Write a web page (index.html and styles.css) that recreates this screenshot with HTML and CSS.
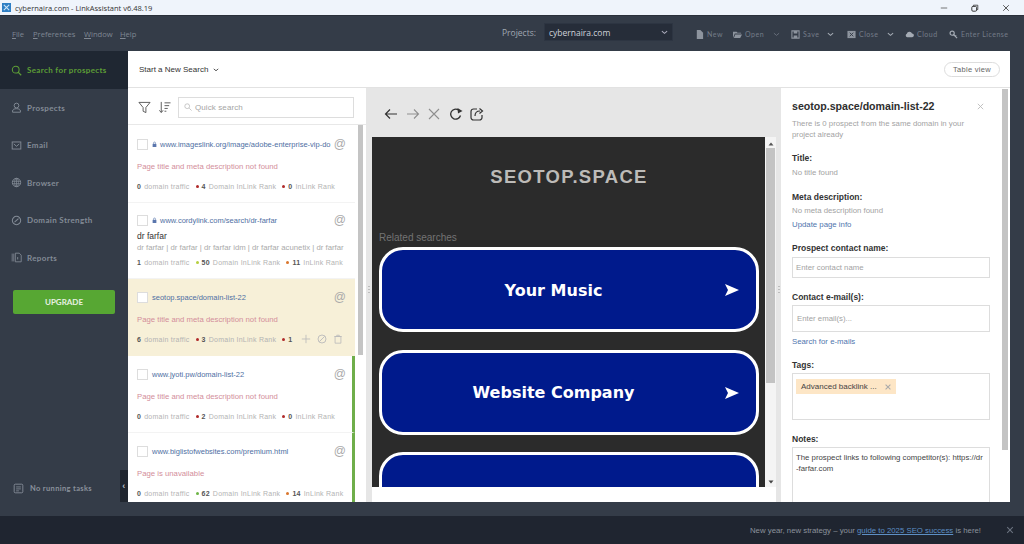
FILE: index.html
```html
<!DOCTYPE html>
<html lang="en">
<head>
<meta charset="utf-8">
<title>LinkAssistant</title>
<link rel="stylesheet" href="styles.css">
</head>
<body>
<header class="titlebar">
  <svg class="app-logo" viewBox="0 0 10 10"><rect width="10" height="10" fill="#2f7fc4"/><path d="M2 2l6 6M8 2L2 8" stroke="#cfe6f7" stroke-width="1.2"/></svg>
  <span class="title-text">cybernaira.com - LinkAssistant v6.48.19</span>
  <div class="win-controls">
    <svg viewBox="0 0 10 10"><path d="M1 5h8" stroke="#555" stroke-width="1"/></svg>
    <svg viewBox="0 0 10 10"><rect x="1" y="3" width="6" height="6" rx="1.5" fill="none" stroke="#333" stroke-width="1.2"/><path d="M3 2.5V1.5h5.5V7H7.5" fill="none" stroke="#333"/></svg>
    <svg viewBox="0 0 10 10"><path d="M1.5 1.5l7 7M8.5 1.5l-7 7" stroke="#333" stroke-width="1"/></svg>
  </div>
</header>

<div class="topbar">
  <nav class="menu">
    <span><u>F</u>ile</span><span><u>P</u>references</span><span><u>W</u>indow</span><span><u>H</u>elp</span>
  </nav>
  <span class="projects-label">Projects:</span>
  <div class="project-select"><span>cybernaira.com</span>
    <svg viewBox="0 0 8 5"><path d="M1 1l3 2.5L7 1" fill="none" stroke="#aab" stroke-width="1.2"/></svg>
  </div>
  <div class="tools">
    <span class="tool t-new"><svg viewBox="0 0 10 10"><path d="M2 0h4l3 3v7H2z" fill="#8d949e"/></svg>New</span>
    <span class="tool t-open"><svg viewBox="0 0 10 10"><path d="M0 2h4l1 1h4v1H2L0 9zM2.500 5H10L8 9H1z" fill="#8d949e"/></svg>Open<svg class="caret dim" viewBox="0 0 8 5"><path d="M1 1l3 2.500L7 1" fill="none" stroke="#6c7480" stroke-width="1"/></svg></span>
    <span class="tool t-save"><svg viewBox="0 0 10 10"><path d="M1 1h8v8H1z" fill="none" stroke="#8d949e" stroke-width="1.200"/><path d="M3 1h4v3H3zM3 6h4v3H3z" fill="#8d949e"/></svg>Save<svg class="caret" viewBox="0 0 8 5"><path d="M1 1l3 2.500L7 1" fill="none" stroke="#a4abb4" stroke-width="1.200"/></svg></span>
    <span class="tool t-close"><svg viewBox="0 0 10 10"><rect x=".5" y="1" width="9" height="8" fill="#8d949e"/><path d="M3 3l4 4M7 3L3 7" stroke="#333b47" stroke-width="1"/></svg>Close<svg class="caret" viewBox="0 0 8 5"><path d="M1 1l3 2.500L7 1" fill="none" stroke="#a4abb4" stroke-width="1.200"/></svg></span>
    <span class="tool t-cloud"><svg viewBox="0 0 10 10"><path d="M2.500 8A2 2 0 0 1 2 4.200 3 3 0 0 1 7.800 4 2 2 0 0 1 8 8z" fill="#a4abb4"/></svg>Cloud</span>
    <span class="tool t-lic"><svg viewBox="0 0 10 10"><circle cx="3.500" cy="3.500" r="2.300" fill="none" stroke="#a4abb4" stroke-width="1.300"/><path d="M5 5l4 4M7 7l1-1" stroke="#a4abb4" stroke-width="1.300"/></svg>Enter License</span>
  </div>
</div>

<div class="workspace">
  <aside class="sidebar">
    <a class="nav-item active"><svg viewBox="0 0 14 14"><circle cx="6" cy="6" r="4.300" fill="none" stroke="currentColor" stroke-width="1.300"/><path d="M9 9l4 4" stroke="currentColor" stroke-width="1.500"/></svg>Search for prospects</a>
    <a class="nav-item"><svg viewBox="0 0 14 14"><circle cx="7" cy="4.500" r="3" fill="none" stroke="currentColor" stroke-width="1.200"/><path d="M2 13v-1.500C2 9.500 4 8.500 7 8.500s5 1 5 3V13z" fill="none" stroke="currentColor" stroke-width="1.200"/></svg>Prospects</a>
    <a class="nav-item"><svg viewBox="0 0 14 14"><rect x="1.500" y="2.500" width="11" height="9" fill="none" stroke="currentColor" stroke-width="1.200"/><path d="M3.500 5L7 8l3.500-3" fill="none" stroke="currentColor" stroke-width="1.200"/></svg>Email</a>
    <a class="nav-item"><svg viewBox="0 0 14 14"><circle cx="7" cy="7" r="5.300" fill="none" stroke="currentColor" stroke-width="1.200"/><path d="M2 5.500h10M2 8.500h10M7 2v10" stroke="currentColor" stroke-width=".9"/><ellipse cx="7" cy="7" rx="2.500" ry="5.300" fill="none" stroke="currentColor" stroke-width=".9"/></svg>Browser</a>
    <a class="nav-item"><svg viewBox="0 0 14 14"><circle cx="7" cy="7" r="5.300" fill="none" stroke="currentColor" stroke-width="1.300"/><path d="M4.500 9L9.500 4.500" stroke="currentColor" stroke-width="1.300"/></svg>Domain Strength</a>
    <a class="nav-item"><svg viewBox="0 0 14 14"><path d="M1.500 2v10M3.500 2v10" stroke="currentColor" stroke-width="1"/><path d="M5.500 1.500h5l2.500 2.500v8.500H5.500z" fill="none" stroke="currentColor" stroke-width="1.100"/><path d="M8.500 6.500v3" stroke="currentColor" stroke-width="1.200"/></svg>Reports</a>
    <button class="upgrade">UPGRADE</button>
    <div class="tasks">
      <svg viewBox="0 0 14 14"><rect x="1.500" y="1.500" width="11" height="11" rx="1.500" fill="none" stroke="currentColor" stroke-width="1.100"/><path d="M4 5h6M4 7.500h6M4 10h3.500" stroke="currentColor" stroke-width="1"/></svg>
      <span>No running tasks</span>
      <div class="collapse-tab">‹</div>
    </div>
  </aside>

  <main class="content">
    <div class="content-head">
      <span class="new-search">Start a New Search</span>
      <svg class="new-search-caret" viewBox="0 0 8 5"><path d="M1 1l3 2.500L7 1" fill="none" stroke="#444" stroke-width="1.200"/></svg>
      <span class="table-view">Table view</span>
    </div>
    <div class="panes">
      <section class="list-pane">
        <div class="list-tools">
          <svg class="ico-filter" viewBox="0 0 14 14"><path d="M1 1.500h12L8.500 7v5.500L5.500 11V7z" fill="none" stroke="#555" stroke-width="1"/></svg>
          <svg class="ico-sort" viewBox="0 0 14 14"><path d="M3.500 1v11M1.500 10l2 2.500 2-2.500" fill="none" stroke="#555" stroke-width="1"/><path d="M7 2h6.500M7 5h5M7 8h3.500M7 11h2" stroke="#555" stroke-width="1"/></svg>
          <div class="quick-search">
            <svg viewBox="0 0 10 10"><circle cx="4" cy="4" r="3" fill="none" stroke="#bbb" stroke-width="1"/><path d="M6.500 6.500L9.500 9.500" stroke="#bbb" stroke-width="1"/></svg>
            <span>Quick search</span>
          </div>
        </div>
        <div class="list-body">
          <div class="items">
            <article class="item item-a">
              <div class="item-row"><span class="check"></span><svg class="lock" viewBox="0 0 8 10"><rect x="1" y="4" width="6" height="5" fill="#5a76ad"/><path d="M2.500 4V2.500a1.500 1.500 0 0 1 3 0V4" fill="none" stroke="#5a76ad"/></svg><span class="url">www.imageslink.org/image/adobe-enterprise-vip-do</span><span class="at">@</span></div>
              <p class="err">Page title and meta description not found</p>
              <div class="metrics"><b>0</b><span>domain traffic</span><i class="dot red"></i><b>4</b><span>Domain InLink Rank</span><i class="dot red"></i><b>0</b><span>InLink Rank</span></div>
            </article>
            <article class="item item-b">
              <div class="item-row"><span class="check"></span><svg class="lock" viewBox="0 0 8 10"><rect x="1" y="4" width="6" height="5" fill="#5a76ad"/><path d="M2.500 4V2.500a1.500 1.500 0 0 1 3 0V4" fill="none" stroke="#5a76ad"/></svg><span class="url">www.cordylink.com/search/dr-farfar</span><span class="at">@</span></div>
              <p class="page-title">dr farfar</p>
              <p class="page-desc">dr farfar | dr farfar | dr farfar idm | dr farfar acunetix | dr farfar</p>
              <div class="metrics"><b>1</b><span>domain traffic</span><i class="dot lime"></i><b>50</b><span>Domain InLink Rank</span><i class="dot orange"></i><b>11</b><span>InLink Rank</span></div>
            </article>
            <article class="item selected">
              <div class="item-row"><span class="check"></span><span class="url plain">seotop.space/domain-list-22</span><span class="at">@</span></div>
              <p class="err">Page title and meta description not found</p>
              <div class="metrics"><b>6</b><span>domain traffic</span><i class="dot red"></i><b>3</b><span>Domain InLink Rank</span><i class="dot red"></i><b>1</b>
                <svg class="act" viewBox="0 0 12 12"><path d="M6 1v10M1 6h10" stroke="#bbb" stroke-width="1"/></svg>
                <svg class="act" viewBox="0 0 12 12"><circle cx="6" cy="6" r="4.800" fill="none" stroke="#bbb" stroke-width="1.100"/><path d="M2.800 9.200l6.400-6.400" stroke="#bbb" stroke-width="1.100"/></svg>
                <svg class="act" viewBox="0 0 12 12"><path d="M2.500 3h7v8h-7zM1.500 3h9M4.500 3V1.500h3V3" fill="none" stroke="#bbb" stroke-width="1"/></svg>
              </div>
            </article>
            <article class="item flagged">
              <div class="item-row"><span class="check"></span><span class="url plain">www.jyoti.pw/domain-list-22</span><span class="at">@</span></div>
              <p class="err">Page title and meta description not found</p>
              <div class="metrics"><b>0</b><span>domain traffic</span><i class="dot red"></i><b>2</b><span>Domain InLink Rank</span><i class="dot red"></i><b>0</b><span>InLink Rank</span></div>
            </article>
            <article class="item flagged">
              <div class="item-row"><span class="check"></span><span class="url plain">www.biglistofwebsites.com/premium.html</span><span class="at">@</span></div>
              <p class="err">Page is unavailable</p>
              <div class="metrics"><b>0</b><span>domain traffic</span><i class="dot green"></i><b>62</b><span>Domain InLink Rank</span><i class="dot orange"></i><b>14</b><span>InLink Rank</span></div>
            </article>
          </div>
          <div class="list-scroll"><div class="list-thumb"></div></div>
        </div>
      </section>

      <section class="browser-pane">
        <div class="browser-tools">
          <svg viewBox="0 0 14 14"><path d="M13 7H1.500M6 2.500L1.500 7 6 11.500" fill="none" stroke="#333" stroke-width="1.200"/></svg>
          <svg viewBox="0 0 14 14"><path d="M1 7h11.500M8 2.500L12.500 7 8 11.500" fill="none" stroke="#8f8f8f" stroke-width="1.100"/></svg>
          <svg viewBox="0 0 14 14"><path d="M2 2l10 10M12 2L2 12" stroke="#8f8f8f" stroke-width="1.100"/></svg>
          <svg viewBox="0 0 14 14"><path d="M11.500 8.500A5 5 0 1 1 9.500 3" fill="none" stroke="#333" stroke-width="1.300"/><path d="M8.500 1l5 3-4.500 2.500z" fill="#333"/></svg>
          <svg viewBox="0 0 14 14"><path d="M7 2H3.500A2.500 2.500 0 0 0 1 4.500v6A2.500 2.500 0 0 0 3.500 13h6a2.500 2.500 0 0 0 2.500-2.500V8" fill="none" stroke="#333" stroke-width="1.200"/><path d="M5 9c0-3 2-5 5-5M9.500 1.500L12.500 4l-3 2.500" fill="none" stroke="#333" stroke-width="1.200"/></svg>
        </div>
        <div class="browser-frame">
          <div class="browser-view">
            <div class="web-page">
              <h1 class="site-name">SEOTOP.SPACE</h1>
              <p class="related">Related searches</p>
              <div class="search-btn"><span>Your Music</span><svg viewBox="0 0 14 12"><path d="M0 0l14 6-14 6 3-6z" fill="#fff"/></svg></div>
              <div class="search-btn"><span>Website Company</span><svg viewBox="0 0 14 12"><path d="M0 0l14 6-14 6 3-6z" fill="#fff"/></svg></div>
              <div class="search-btn"></div>
            </div>
            <div class="view-scroll">
              <svg viewBox="0 0 6 4"><path d="M3 .5L5.500 3.500H.5z" fill="#555"/></svg>
              <div class="view-thumb"></div>
              <svg class="down" viewBox="0 0 6 4"><path d="M3 3.500L5.500 .5H.5z" fill="#444"/></svg>
            </div>
          </div>
          <div class="view-foot"></div>
        </div>
      </section>

      <section class="detail-pane">
        <div class="detail-body">
          <div class="detail-head"><h2>seotop.space/domain-list-22</h2><svg viewBox="0 0 10 10"><path d="M2 2l6 6M8 2l-6 6" stroke="#bbb" stroke-width="1"/></svg></div>
          <p class="muted sub">There is 0 prospect from the same domain in your project already</p>
          <h3 class="lbl l-title">Title:</h3>
          <p class="muted">No title found</p>
          <h3 class="lbl l-meta">Meta description:</h3>
          <p class="muted">No meta description found</p>
          <p class="link l-update">Update page info</p>
          <h3 class="lbl l-name">Prospect contact name:</h3>
          <div class="field f-name">Enter contact name</div>
          <h3 class="lbl l-mail">Contact e-mail(s):</h3>
          <div class="field f-mail">Enter email(s)...</div>
          <p class="link l-search">Search for e-mails</p>
          <h3 class="lbl l-tags">Tags:</h3>
          <div class="field f-tags"><span class="tag">Advanced backlink ...<svg viewBox="0 0 10 10"><path d="M2 2l6 6M8 2l-6 6" stroke="#aaa" stroke-width="1.300"/></svg></span></div>
          <h3 class="lbl l-notes">Notes:</h3>
          <div class="field f-notes">The prospect links to following competitor(s): https://dr<br>-farfar.com</div>
        </div>
        <div class="detail-scroll"><div class="detail-thumb"></div></div>
      </section>
    </div>
  </main>
</div>

<footer class="news">
  <span>New year, new strategy – your <a>guide to 2025 SEO success</a> is here!</span>
  <svg viewBox="0 0 10 10"><path d="M1.500 1.500l7 7M8.500 1.500l-7 7" stroke="#6b7380" stroke-width="1.300"/></svg>
</footer>
</body>
</html>
```
FILE: styles.css
```css
* { box-sizing: border-box; margin: 0; padding: 0; }
html, body { width: 1024px; height: 544px; overflow: hidden; }
body { display: flex; flex-direction: column; background: #343c48; font-family: "Liberation Sans", Arial, sans-serif; color: #333; }
svg { display: block; flex: none; }

.titlebar { height: 15px; flex: none; background: #eff4fb; display: flex; align-items: center; padding-left: 2px; }
.app-logo { width: 9px; height: 9px; margin-right: 4px; }
.title-text { font: 7.500px "Open Sans", sans-serif; color: #333; }
.win-controls { margin-left: auto; display: flex; }
.win-controls svg { width: 8px; height: 8px; margin-right: 23px; }
.win-controls svg:last-child { margin-right: 14px; }

.topbar { height: 36px; flex: none; display: flex; align-items: center; padding-bottom: 3px; background: #343c48; border-top: 1px solid #2a303a; }
.menu { display: flex; width: 502px; padding-left: 12px; margin-top: 4px; font: 7.600px "Open Sans", sans-serif; color: #7f8793; }
.menu span:nth-child(1) { width: 21px; }
.menu span:nth-child(2) { width: 51px; }
.menu span:nth-child(3) { width: 36px; }
.projects-label { width: 42px; font: 8.500px "Open Sans", sans-serif; color: #a1a8b2; }
.project-select { width: 129px; height: 18px; background: #262d39; border: 1px solid #2d3542; display: flex; align-items: center; justify-content: space-between; padding: 0 4px 0 4px; font: 8.500px "Open Sans", sans-serif; color: #cfd3d9; }
.project-select svg { width: 7px; height: 5px; }
.tools { display: flex; align-items: center; margin-top: 4px; font: 7px Lato, sans-serif; letter-spacing: .5px; color: #757d89; margin-left: 22px; }
.tool { display: flex; align-items: center; }
.tool > svg:first-child { width: 9px; height: 9px; margin-right: 3px; }
.caret { width: 7px; height: 5px; margin-left: 8px; }
.caret.dim { margin-left: 9px; }
.t-new { width: 38px; }
.t-open { width: 58px; }
.t-save { width: 56px; }
.t-close { width: 58px; }
.t-cloud { width: 44px; }

.workspace { height: 451px; flex: none; display: flex; }
.sidebar { width: 128px; flex: none; display: flex; flex-direction: column; background: #343c48; }
.nav-item { height: 37.500px; flex: none; display: flex; align-items: center; padding-left: 11px; gap: 5px; font: 700 8px Lato, sans-serif; letter-spacing: .35px; color: #838b96; }
.nav-item svg { width: 11px; height: 11px; }
.nav-item.active { height: 38px; background: #1f2732; color: #5d9e36; }
.upgrade { width: 102px; height: 24px; flex: none; margin: 13px 0 0 13px; border: 0; border-radius: 2px; background: #57a733; color: #e8f1e2; font: 700 8px Lato, sans-serif; }
.tasks { margin-top: auto; height: 32px; flex: none; display: flex; align-items: center; padding-left: 13px; color: #8a919c; font: 700 7.500px Lato, sans-serif; letter-spacing: .35px; }
.tasks svg { width: 11px; height: 11px; margin-right: 6px; margin-top: 4px; }
.tasks span { margin-top: 4px; }
.collapse-tab { margin-left: auto; width: 8px; height: 32px; background: #20262f; color: #b8bdc4; font: 700 9px "Liberation Sans", sans-serif; display: flex; align-items: center; justify-content: center; }

.content { width: 882px; flex: none; display: flex; flex-direction: column; background: #fff; }
.content-head { height: 37px; flex: none; display: flex; align-items: center; padding: 1px 0 0 11px; border-bottom: 1px solid #e2e2e2; }
.new-search { font: 8px "Liberation Sans", sans-serif; color: #333; }
.new-search-caret { width: 6px; height: 4px; margin-left: 5px; }
.table-view { margin-left: auto; margin-right: 10px; width: 56px; height: 15px; border: 1px solid #ddd; border-radius: 8px; font: 7.500px "Liberation Sans", sans-serif; letter-spacing: .3px; color: #666; display: flex; align-items: center; justify-content: center; }
.panes { flex: 1; min-height: 0; display: flex; }

.list-pane { width: 238px; flex: none; display: flex; flex-direction: column; }
.list-tools { height: 37px; flex: none; display: flex; align-items: center; padding: 2px 0 0 10px; border-bottom: 1px solid #e8e8e8; }
.ico-filter { width: 13px; height: 13px; }
.ico-sort { width: 13px; height: 13px; margin-left: 7px; }
.quick-search { width: 176px; height: 21px; margin-left: 7px; border: 1px solid #ddd; display: flex; align-items: center; padding-left: 5px; font: 8px "Liberation Sans", sans-serif; color: #a5a5a5; letter-spacing: .1px; }
.quick-search svg { width: 8px; height: 8px; margin-right: 3px; }
.list-body { flex: 1; min-height: 0; display: flex; overflow: hidden; }
.items { width: 227px; flex: none; }
.item { height: 77px; padding: 11px 0 0 9px; border-bottom: 1px solid #f3f3f3; overflow: hidden; }
.item-a { height: 78px; padding-top: 12px; }
.item-b { height: 76px; padding-top: 10px; }
.item.selected { background: #f7f0d8; border-bottom: 0; }
.item.flagged { border-right: 3px solid #6fae4a; }
.item-row { height: 14px; display: flex; align-items: center; }
.check { width: 11px; height: 11px; background: #fff; border: 1px solid #ddd; flex: none; margin-right: 4px; }
.lock { width: 5px; height: 7px; margin: 0 3px 0 0; }
.url { font: 7.500px "Liberation Sans", sans-serif; color: #4f6fa3; white-space: nowrap; }
.at { margin-left: auto; margin-right: 9px; font: 12px "Liberation Sans", sans-serif; color: #aaa; }
.flagged .at { margin-right: 6px; }
.err { margin-top: 9px; height: 14px; line-height: 14px; font-size: 7.750px; color: #d38e9a; white-space: nowrap; }
.metrics { margin-top: 5px; height: 14px; display: flex; align-items: center; font-size: 7px; letter-spacing: .25px; color: #b3b3b3; white-space: nowrap; }
.metrics b { color: #555; font-weight: 700; margin-right: 3px; }
.dot { width: 3px; height: 3px; border-radius: 50%; margin: 0 3px 0 6px; flex: none; }
.dot.red { background: #b02a2a; }
.dot.lime { background: #b6cf3e; }
.dot.green { background: #6db545; }
.dot.orange { background: #d9762c; }
.act { width: 10px; height: 10px; margin-left: 6px; }
.page-title { margin-top: 2px; height: 14px; line-height: 14px; font-size: 8.500px; color: #333; }
.page-desc { height: 14px; margin-top: -2px; line-height: 14px; font-size: 7.750px; color: #aaa; white-space: nowrap; }
.item-b .metrics { margin-top: 0; }
.list-scroll { width: 11px; flex: none; padding-left: 3px; }
.list-thumb { width: 5px; height: 230px; background: #c4c4c4; }

.browser-pane { width: 415px; flex: none; display: flex; flex-direction: column; background-color: #e6e6e6; background-image: repeating-linear-gradient(#bdbdbd 0 1px, transparent 1px 3px), repeating-linear-gradient(#bdbdbd 0 1px, transparent 1px 3px); background-repeat: no-repeat; background-size: 2px 8px, 2px 8px; background-position: 2px 198px, 412px 198px; }
.browser-tools { height: 49px; flex: none; display: flex; align-items: center; padding: 2px 0 0 18px; gap: 7.500px; }
.browser-tools svg { width: 14px; height: 14px; }
.browser-frame { flex: 1; min-height: 0; margin: 0 5px 0 6px; display: flex; flex-direction: column; background: #fff; }
.browser-view { height: 350px; flex: none; display: flex; }
.web-page { width: 393px; flex: none; background: #2b2b2b; padding: 0 6px 0 7px; overflow: hidden; }
.site-name { margin-top: 28px; height: 24px; text-align: center; font: 700 18.500px/24px "Liberation Sans", sans-serif; letter-spacing: 1.300px; color: #bdbbb8; }
.related { margin-top: 43px; height: 12px; line-height: 12px; font-size: 10px; color: #737373; }
.search-btn { height: 85px; margin: 3px 0 17.500px; padding: 1px 17px 0 0; border: 3px solid #fff; border-radius: 24px; background: #001a8c; display: flex; align-items: center; color: #fff; font: 700 16px "DejaVu Sans", sans-serif; }
.search-btn span { flex: 1; text-align: center; }
.search-btn svg { width: 14px; height: 12px; }
.search-btn + .search-btn { margin-top: 0; }
.view-scroll { width: 11px; flex: none; display: flex; flex-direction: column; align-items: center; padding-top: 5px; background: #f4f4f4; }
.view-scroll svg { width: 6px; height: 4px; }
.view-thumb { width: 9px; height: 235px; margin-top: 2px; background: #c3c3c3; }
.view-scroll .down { margin-top: auto; margin-bottom: 3px; }
.view-foot { flex: 1; background: #fff; }

.detail-pane { width: 229px; flex: none; display: flex; background: #fff; }
.detail-body { width: 220px; flex: none; padding: 11px 0 0 11px; overflow: hidden; }
.detail-head { display: flex; align-items: center; justify-content: space-between; padding-right: 16px; height: 14px; }
.detail-head h2 { font: 700 10.600px "Liberation Sans", sans-serif; color: #2e2e2e; white-space: nowrap; }
.detail-head svg { width: 9px; height: 9px; }
.muted { font-size: 7.800px; line-height: 11px; color: #a3a3a3; }
.sub { margin-top: 5px; width: 190px; }
.lbl { font: 700 8.500px/11px "Liberation Sans", sans-serif; color: #333; }
.link { font-size: 7.800px; line-height: 11px; color: #4f75ad; }
.l-title { margin-top: 13px; margin-bottom: 3px; }
.l-meta { margin-top: 14px; margin-bottom: 2px; }
.l-update { margin-top: 3px; }
.l-name { margin-top: 13px; }
.field { width: 198px; border: 1px solid #ddd; font-size: 7.800px; color: #a3a3a3; }
.f-name { height: 21px; margin-top: 3px; padding-left: 3px; line-height: 19px; }
.l-mail { margin-top: 14px; }
.f-mail { height: 27px; margin-top: 2px; padding-left: 4px; line-height: 25px; }
.l-search { margin-top: 4px; }
.l-tags { margin-top: 13px; }
.f-tags { height: 47px; margin-top: 2px; padding: 5px 0 0 3px; }
.tag { display: inline-flex; align-items: center; width: 100px; height: 15px; padding-left: 5px; background: #fde6c6; color: #444; font-size: 8px; white-space: nowrap; }
.tag svg { width: 8px; height: 8px; margin-left: 7px; }
.l-notes { margin-top: 14px; }
.f-notes { height: 70px; margin-top: 2px; padding: 4px 3px; font-size: 7.800px; line-height: 11px; color: #444; white-space: nowrap; }
.detail-scroll { width: 9px; flex: none; padding-left: 1px; }
.detail-thumb { width: 6px; height: 361px; margin-top: 1px; background: #c4c4c4; }

.news { height: 28px; flex: none; margin-top: auto; display: flex; align-items: center; justify-content: flex-end; background: #1f2530; padding-right: 10px; font: 7.800px "Liberation Sans", sans-serif; color: #8b929c; }
.news a { color: #5d8fc4; text-decoration: underline; }
.news svg { width: 8px; height: 8px; margin-left: 25px; }
```
